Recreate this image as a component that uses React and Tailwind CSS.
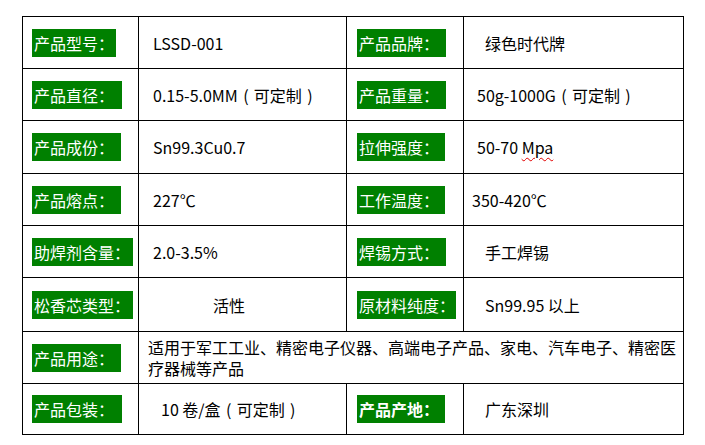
import React from "react";

const font = { fontFamily: '"Noto Sans CJK SC", "Noto Sans", sans-serif' };

function Label({ children, w, bold }) {
  return (
    <span
      className={
        "inline-block h-[28px] leading-[28px] pl-[2px] bg-[#008000] text-white text-[16px] whitespace-nowrap " +
        w +
        (bold ? " font-bold" : "")
      }
    >
      {children}
    </span>
  );
}

function Cell({ children, className = "" }) {
  return (
    <div
      className={
        "flex items-center border-r border-b border-black text-[16px] text-black whitespace-nowrap " +
        className
      }
    >
      {children}
    </div>
  );
}

function Custom() {
  return (
    <>
      <span className="inline-block w-[16px] text-center">(</span>
      可定制
      <span className="inline-block w-[16px] text-center">)</span>
    </>
  );
}

export default function App() {
  return (
    <div className="w-[705px] h-[445px] bg-white overflow-hidden" style={font}>
      <div className="ml-[22px] mt-[16px] w-[662px] grid grid-cols-[116px_208px_117px_220px] grid-rows-[52px_52px_53px_52px_52px_54px_52px_51px] border-l border-t border-black">
        {/* Row 1 */}
        <Cell className="pl-[9px]"><Label w="w-[84px]">产品型号：</Label></Cell>
        <Cell className="pl-[14px]">LSSD-001</Cell>
        <Cell className="pl-[10px]"><Label w="w-[89px]">产品品牌：</Label></Cell>
        <Cell className="pl-[21px]">绿色时代牌</Cell>

        {/* Row 2 */}
        <Cell className="pl-[9px]"><Label w="w-[90px]">产品直径：</Label></Cell>
        <Cell className="pl-[14px]">0.15-5.0MM<Custom /></Cell>
        <Cell className="pl-[10px]"><Label w="w-[89px]">产品重量：</Label></Cell>
        <Cell className="pl-[13px]">50g-1000G<Custom /></Cell>

        {/* Row 3 */}
        <Cell className="pl-[9px]"><Label w="w-[89px]">产品成份：</Label></Cell>
        <Cell className="pl-[14px]">Sn99.3Cu0.7</Cell>
        <Cell className="pl-[10px]"><Label w="w-[88px]">拉伸强度：</Label></Cell>
        <Cell className="pl-[13px]">
          50-70&nbsp;
          <span className="underline decoration-wavy decoration-[#e00000] decoration-1 underline-offset-[3px]">Mpa</span>
        </Cell>

        {/* Row 4 */}
        <Cell className="pl-[9px]"><Label w="w-[89px]">产品熔点：</Label></Cell>
        <Cell className="pl-[14px]">227℃</Cell>
        <Cell className="pl-[10px]"><Label w="w-[88px]">工作温度：</Label></Cell>
        <Cell className="pl-[8px]">350-420℃</Cell>

        {/* Row 5 */}
        <Cell className="pl-[9px]"><Label w="w-[101px]">助焊剂含量：</Label></Cell>
        <Cell className="pl-[14px]">2.0-3.5%</Cell>
        <Cell className="pl-[10px]"><Label w="w-[89px]">焊锡方式：</Label></Cell>
        <Cell className="pl-[21px]">手工焊锡</Cell>

        {/* Row 6 */}
        <Cell className="pl-[9px]"><Label w="w-[101px]">松香芯类型：</Label></Cell>
        <Cell className="pl-[74px]">活性</Cell>
        <Cell className="pl-[10px]"><Label w="w-[99px]">原材料纯度：</Label></Cell>
        <Cell className="pl-[21px]">Sn99.95 以上</Cell>

        {/* Row 7 */}
        <Cell className="pl-[9px]"><Label w="w-[89px]">产品用途：</Label></Cell>
        <div className="col-span-3 flex items-center border-r border-b border-black pl-[9px] text-[16px] leading-[21px] text-black whitespace-nowrap">
          <div>
            <div>适用于军工工业、精密电子仪器、高端电子产品、家电、汽车电子、精密医</div>
            <div>疗器械等产品</div>
          </div>
        </div>

        {/* Row 8 */}
        <Cell className="pl-[9px]"><Label w="w-[90px]">产品包装：</Label></Cell>
        <Cell className="pl-[22px]">10 卷/盒<Custom /></Cell>
        <Cell className="pl-[10px]"><Label w="w-[88px]" bold>产品产地：</Label></Cell>
        <Cell className="pl-[21px]">广东深圳</Cell>
      </div>
    </div>
  );
}
